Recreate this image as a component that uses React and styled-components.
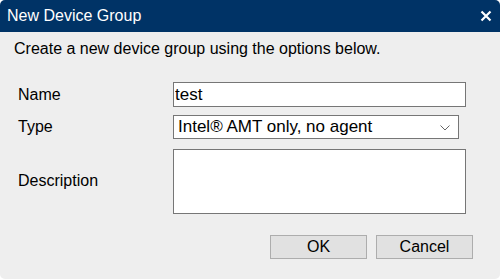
import React from 'react'
import styled, { createGlobalStyle } from 'styled-components'

const GlobalStyle = createGlobalStyle`
  html, body {
    margin: 0;
    padding: 0;
    background: #ffffff;
  }
  body {
    font-family: "Liberation Sans", Arial, sans-serif;
  }
`

const Dialog = styled.div`
  width: 500px;
  height: 279px;
  background: #eeeeee;
  border-radius: 5px;
  overflow: hidden;
  display: flex;
  flex-direction: column;
  box-sizing: border-box;
`

const TitleBar = styled.div`
  height: 32px;
  background: #003366;
  color: #ffffff;
  display: flex;
  align-items: center;
  justify-content: space-between;
  padding: 0 7px 0 7px;
  font-size: 16px;
`

const CloseButton = styled.button`
  background: none;
  border: none;
  padding: 0;
  width: 14px;
  height: 14px;
  display: flex;
  align-items: center;
  justify-content: center;
  cursor: pointer;
`

const Body = styled.div`
  flex: 1;
  padding: 7px 14px 0 14px;
  display: flex;
  flex-direction: column;
`

const Intro = styled.div`
  font-size: 16px;
  color: #000;
  line-height: 19px;
`

const Form = styled.div`
  display: grid;
  grid-template-columns: 159px 293px;
  row-gap: 8px;
  margin-top: 24px;
  align-items: center;
`

const Label = styled.label`
  font-size: 16px;
  color: #000;
  padding-left: 4px;
`

const TextInput = styled.input`
  box-sizing: border-box;
  height: 25px;
  width: 293px;
  border: 1px solid #767676;
  background: #fff;
  font-family: inherit;
  font-size: 17px;
  padding: 0 1px;
  outline: none;
  color: #000;
`

const SelectBox = styled.div`
  position: relative;
  box-sizing: border-box;
  height: 24px;
  width: 286px;
  border: 1px solid #767676;
  background: #fff;
  font-size: 17px;
  display: flex;
  align-items: center;
  padding: 0 0 0 4px;
  color: #000;
`

const Chevron = styled.svg`
  position: absolute;
  right: 8px;
  top: 9px;
`

const TextArea = styled.textarea`
  box-sizing: border-box;
  height: 65px;
  width: 293px;
  border: 1px solid #767676;
  background: #fff;
  resize: none;
  font-family: inherit;
  font-size: 17px;
  outline: none;
  margin: 2px 0 0 0;
`

const Footer = styled.div`
  display: flex;
  justify-content: flex-end;
  gap: 9px;
  padding: 21px 13px 0 0;
`

const Button = styled.button`
  box-sizing: border-box;
  width: 97px;
  height: 24px;
  border: 1px solid #adadad;
  background: #e1e1e1;
  font-family: inherit;
  font-size: 16px;
  color: #000;
  padding: 0;
  cursor: pointer;
`

export default function App() {
  return (
    <>
      <GlobalStyle />
      <Dialog>
        <TitleBar>
          <span>New Device Group</span>
          <CloseButton aria-label="Close">
            <svg width="12" height="12" viewBox="0 0 12 12">
              <path d="M1.5 1.5 L10.5 10.5 M10.5 1.5 L1.5 10.5" stroke="#fff" strokeWidth="2.2" />
            </svg>
          </CloseButton>
        </TitleBar>
        <Body>
          <Intro>Create a new device group using the options below.</Intro>
          <Form>
            <Label>Name</Label>
            <TextInput defaultValue="test" />
            <Label>Type</Label>
            <SelectBox>
              Intel® AMT only, no agent
              <Chevron width="10" height="6" viewBox="0 0 10 6">
                <path d="M0.5 0.5 L5 5 L9.5 0.5" stroke="#666" strokeWidth="1" fill="none" />
              </Chevron>
            </SelectBox>
            <Label>Description</Label>
            <TextArea />
          </Form>
          <Footer>
            <Button>OK</Button>
            <Button>Cancel</Button>
          </Footer>
        </Body>
      </Dialog>
    </>
  )
}
